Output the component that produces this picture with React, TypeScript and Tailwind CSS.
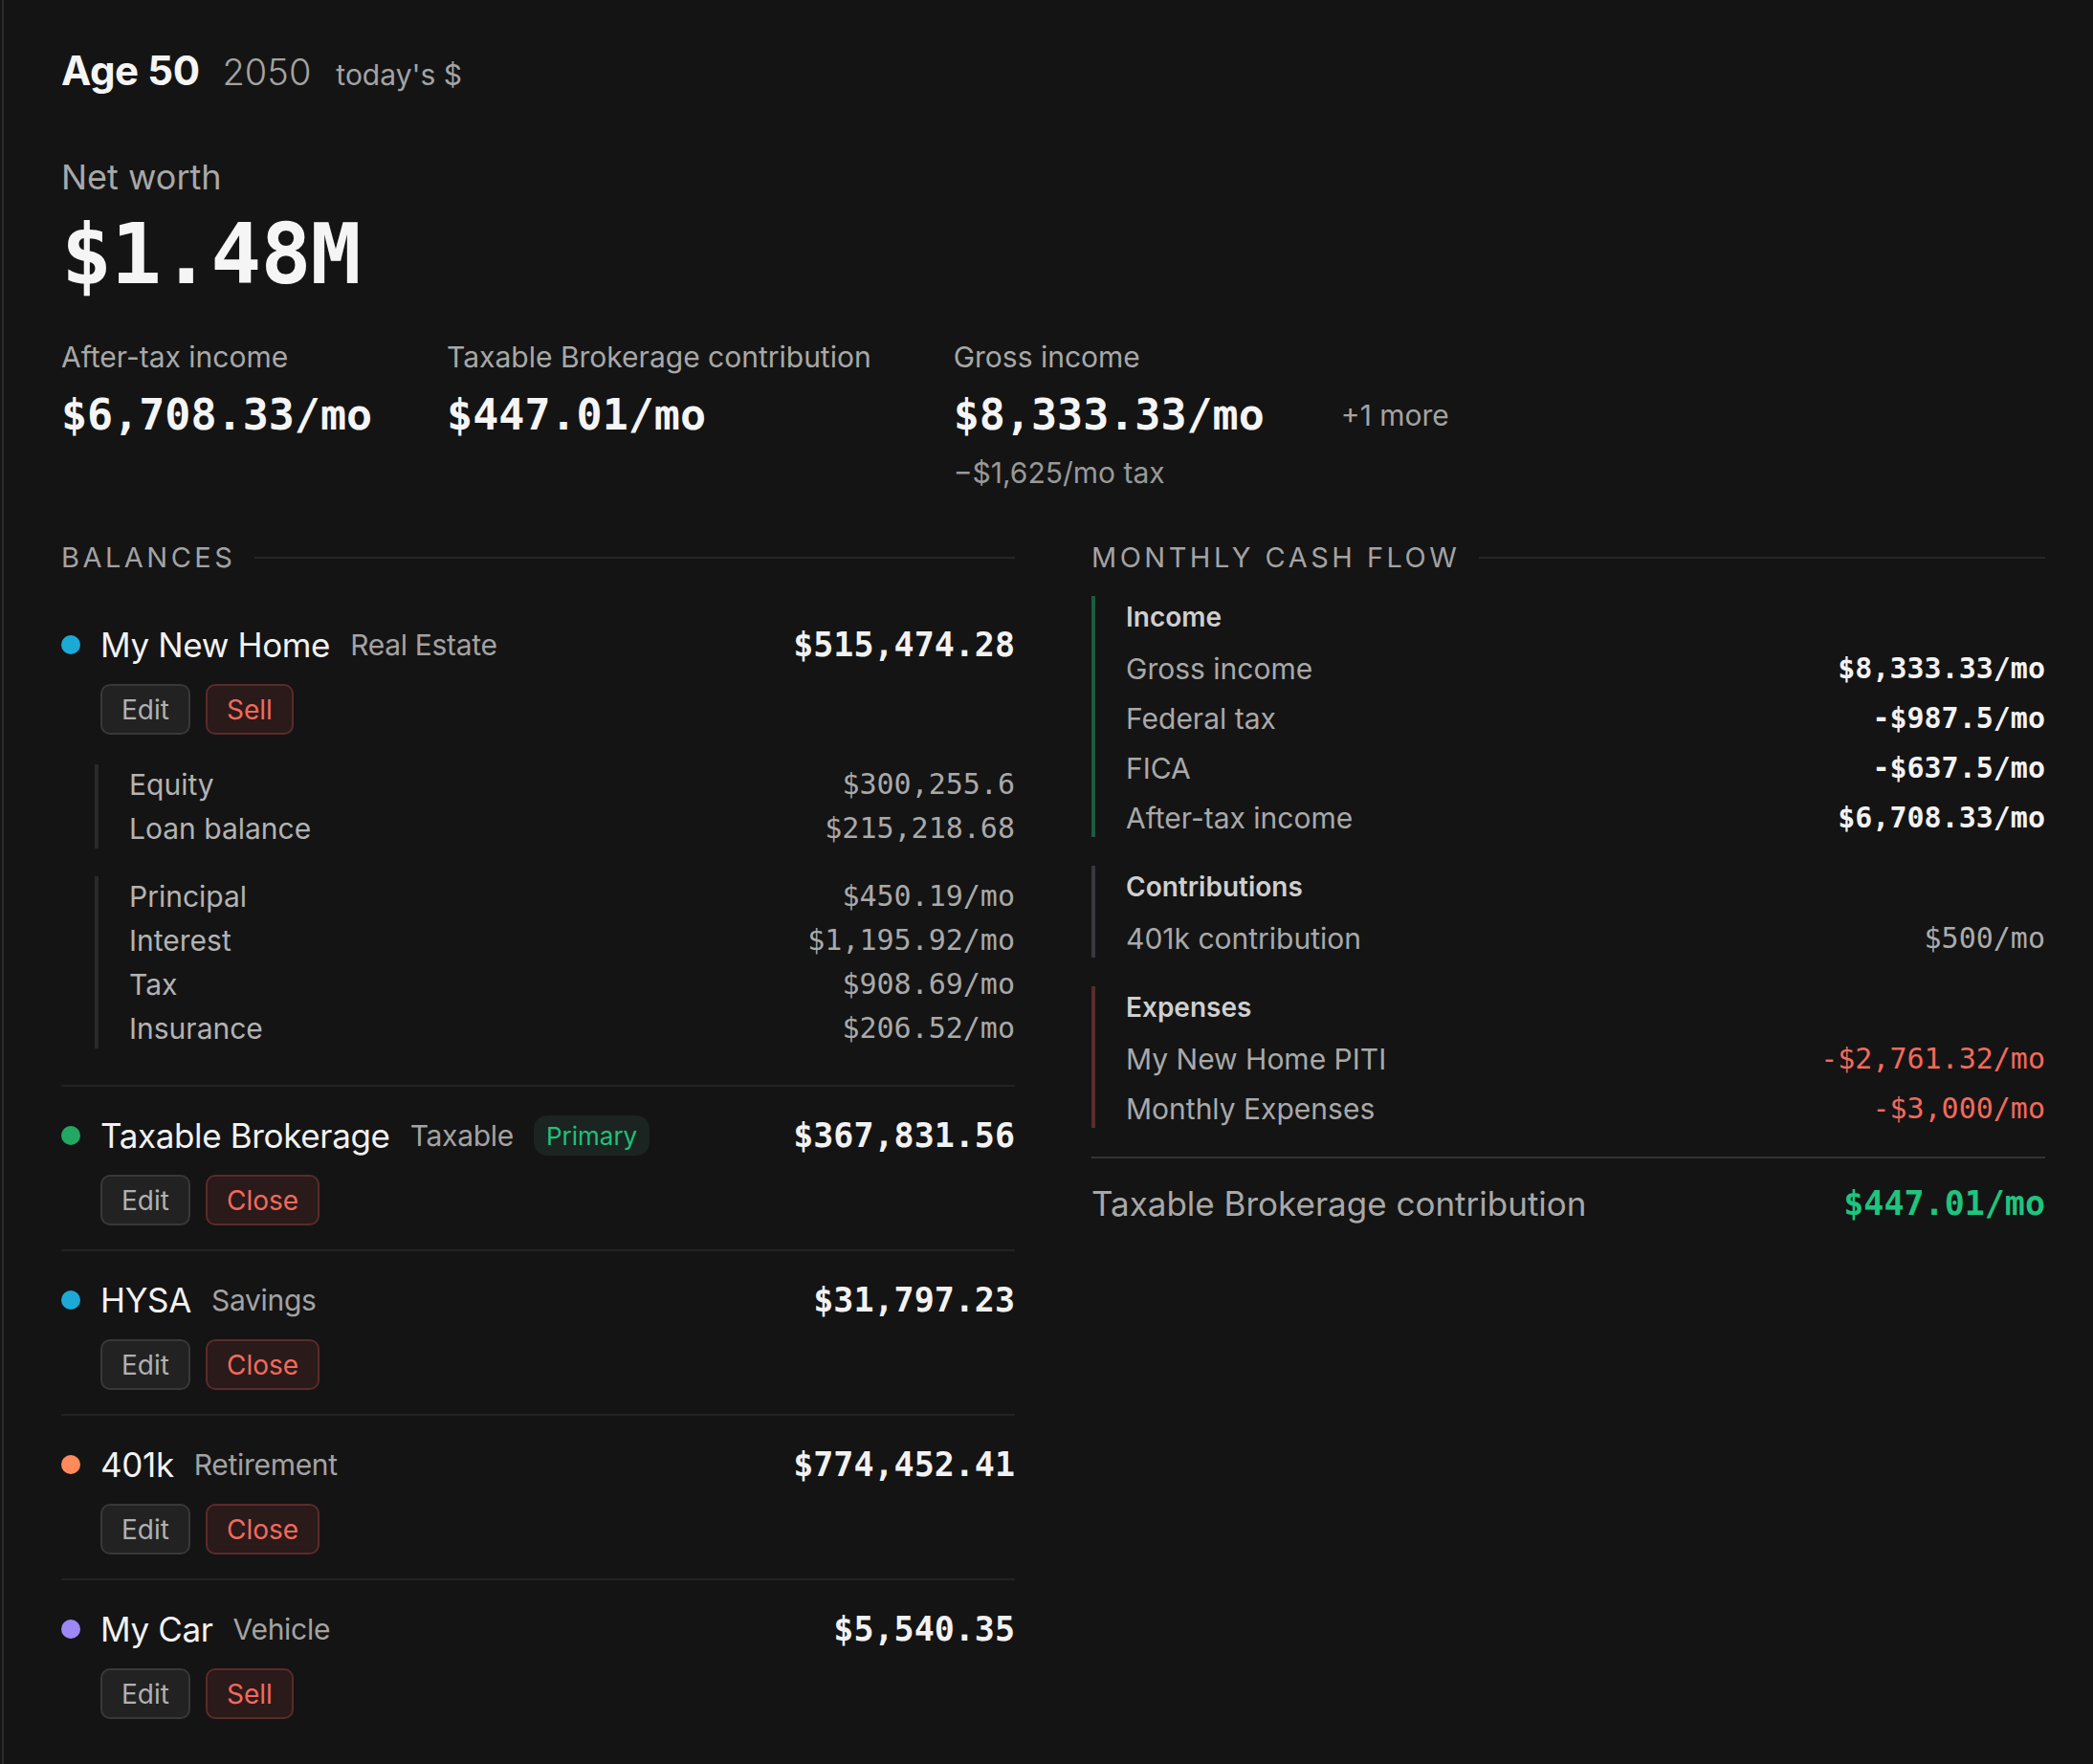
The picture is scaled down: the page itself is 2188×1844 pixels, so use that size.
import React from "react";

type Detail = { label: string; value: string };

function DetailGroup({ rows }: { rows: Detail[] }) {
  return (
    <div className="flex flex-col gap-[4px] border-l-4 border-[#2a2a2a] pl-8">
      {rows.map((r) => (
        <div key={r.label} className="flex items-center justify-between leading-[42px]">
          <span className="text-[30px] text-[#b3b3b3]">{r.label}</span>
          <span className="font-['DejaVu_Sans_Mono',monospace] text-[30px] text-[#a9a9a9]">{r.value}</span>
        </div>
      ))}
    </div>
  );
}

function Item({
  dotClass,
  name,
  type,
  badge,
  value,
  action,
  last,
  children,
}: {
  dotClass: string;
  name: string;
  type: string;
  badge?: string;
  value: string;
  action: string;
  last?: boolean;
  children?: React.ReactNode;
}) {
  return (
    <div className={last ? "pt-[30px] pb-[25px]" : "border-b-2 border-[#232323] pt-[30px] pb-[25px]"}>
      <div className="flex h-[42px] items-center justify-between">
        <div className="flex items-center">
          <span className={`h-5 w-5 rounded-full ${dotClass}`} />
          <span className="ml-[21px] text-[35px] leading-[42px] tracking-[-0.01em] text-[#f2f2f2]">{name}</span>
          <span className="ml-[21px] text-[30px] leading-[42px] tracking-[-0.01em] text-[#a3a3a3]">{type}</span>
          {badge && (
            <span className="ml-[21px] flex h-[42px] items-center rounded-[14px] bg-[#1b2420] px-[13px] text-[26px] text-[#1fc07c]">
              {badge}
            </span>
          )}
        </div>
        <span className="font-['DejaVu_Sans_Mono',monospace] text-[35px] font-bold text-[#f2f2f2]">{value}</span>
      </div>
      <div className="ml-[41px] mt-5 flex gap-4">
        <button className="flex h-[53px] items-center rounded-[10px] border-2 border-[#383838] bg-[#222222] px-[20px] text-[28px] text-[#b0b0b0]">
          Edit
        </button>
        <button className="flex h-[53px] items-center rounded-[10px] border-2 border-[#5a2b2a] bg-[#2a1a1a] px-[20px] text-[28px] text-[#f26a5c]">
          {action}
        </button>
      </div>
      {children}
    </div>
  );
}

function FlowGroup({
  title,
  borderClass,
  rows,
}: {
  title: string;
  borderClass: string;
  rows: { label: string; value: string; valueClass: string }[];
}) {
  return (
    <div className={`flex flex-col gap-3 border-l-4 pl-8 ${borderClass}`}>
      <div className="text-[28px] font-semibold leading-[44px] text-[#cfcfcf]">{title}</div>
      {rows.map((r) => (
        <div key={r.label} className="flex items-center justify-between leading-[40px]">
          <span className="text-[30px] text-[#a9a9a9]">{r.label}</span>
          <span className={`font-['DejaVu_Sans_Mono',monospace] text-[30px] ${r.valueClass}`}>{r.value}</span>
        </div>
      ))}
    </div>
  );
}

function SectionHeader({ title }: { title: string }) {
  return (
    <div className="mb-[22px] flex h-[36px] items-center gap-5">
      <span className="text-[29px] uppercase leading-[36px] tracking-[0.12em] text-[#a3a3a3]">{title}</span>
      <div className="h-[2px] flex-1 bg-[#262626]" />
    </div>
  );
}

export default function App() {
  return (
    <div className="min-h-screen bg-[#141414] font-['Inter','Noto_Sans',sans-serif] text-[#f2f2f2]">
      <div className="ml-[2px] min-h-screen border-l-2 border-[#2b2b2b] pl-[60px] pr-[50px] pt-[49px] pb-[20px]">
        {/* Header */}
        <div className="flex h-[50px] items-baseline">
          <span className="text-[42px] font-bold leading-[50px] tracking-[-0.01em] text-[#f5f5f5]">Age 50</span>
          <span className="ml-[24px] text-[38px] font-light leading-[50px] text-[#a3a3a3]">2050</span>
          <span className="ml-[26px] text-[30px] leading-[50px] text-[#a3a3a3]">today's $</span>
        </div>

        {/* Net worth */}
        <div className="mt-[65px] text-[36px] leading-[42px] text-[#a8a8a8]">Net worth</div>
        <div className="mt-[15px] font-['DejaVu_Sans_Mono',monospace] text-[88px] font-bold leading-[90px] tracking-[-0.01em] text-[#f5f5f5]">
          $1.48M
        </div>

        {/* Stats */}
        <div className="mt-[42px] flex items-start">
          <div className="flex flex-col">
            <span className="text-[30px] leading-[40px] text-[#a8a8a8]">After-tax income</span>
            <span className="mt-[13px] font-['DejaVu_Sans_Mono',monospace] text-[45px] font-bold leading-[56px] text-[#f5f5f5]">
              $6,708.33/mo
            </span>
          </div>
          <div className="ml-[78px] flex flex-col">
            <span className="text-[30px] leading-[40px] text-[#a8a8a8]">Taxable Brokerage contribution</span>
            <span className="mt-[13px] font-['DejaVu_Sans_Mono',monospace] text-[45px] font-bold leading-[56px] text-[#f5f5f5]">
              $447.01/mo
            </span>
          </div>
          <div className="ml-[86px] flex flex-col">
            <span className="text-[30px] leading-[40px] text-[#a8a8a8]">Gross income</span>
            <span className="mt-[13px] font-['DejaVu_Sans_Mono',monospace] text-[45px] font-bold leading-[56px] text-[#f5f5f5]">
              $8,333.33/mo
            </span>
            <span className="mt-[12px] text-[30px] leading-[40px] text-[#999999]">−$1,625/mo tax</span>
          </div>
          <span className="ml-20 self-center text-[30px] leading-[40px] text-[#a3a3a3]">+1 more</span>
        </div>

        {/* Columns */}
        <div className="mt-[51px] grid grid-cols-2 items-start gap-x-20">
          {/* Balances */}
          <div>
            <SectionHeader title="Balances" />
            <Item dotClass="bg-[#1ca9d5]" name="My New Home" type="Real Estate" value="$515,474.28" action="Sell">
              <div className="ml-[35px] mt-[31px] flex flex-col gap-[29px] pb-[13px]">
                <DetailGroup
                  rows={[
                    { label: "Equity", value: "$300,255.6" },
                    { label: "Loan balance", value: "$215,218.68" },
                  ]}
                />
                <DetailGroup
                  rows={[
                    { label: "Principal", value: "$450.19/mo" },
                    { label: "Interest", value: "$1,195.92/mo" },
                    { label: "Tax", value: "$908.69/mo" },
                    { label: "Insurance", value: "$206.52/mo" },
                  ]}
                />
              </div>
            </Item>
            <Item
              dotClass="bg-[#22a862]"
              name="Taxable Brokerage"
              type="Taxable"
              badge="Primary"
              value="$367,831.56"
              action="Close"
            />
            <Item dotClass="bg-[#1ca9d5]" name="HYSA" type="Savings" value="$31,797.23" action="Close" />
            <Item dotClass="bg-[#ff8a5c]" name="401k" type="Retirement" value="$774,452.41" action="Close" />
            <Item dotClass="bg-[#9d88f5]" name="My Car" type="Vehicle" value="$5,540.35" action="Sell" last />
          </div>

          {/* Monthly cash flow */}
          <div>
            <SectionHeader title="Monthly Cash Flow" />
            <div className="flex flex-col gap-[30px]">
              <FlowGroup
                title="Income"
                borderClass="border-[#1d5a41]"
                rows={[
                  { label: "Gross income", value: "$8,333.33/mo", valueClass: "font-bold text-[#f2f2f2]" },
                  { label: "Federal tax", value: "-$987.5/mo", valueClass: "font-bold text-[#f2f2f2]" },
                  { label: "FICA", value: "-$637.5/mo", valueClass: "font-bold text-[#f2f2f2]" },
                  { label: "After-tax income", value: "$6,708.33/mo", valueClass: "font-bold text-[#f2f2f2]" },
                ]}
              />
              <FlowGroup
                title="Contributions"
                borderClass="border-[#38383d]"
                rows={[{ label: "401k contribution", value: "$500/mo", valueClass: "text-[#ababab]" }]}
              />
              <FlowGroup
                title="Expenses"
                borderClass="border-[#5a2d2d]"
                rows={[
                  { label: "My New Home PITI", value: "-$2,761.32/mo", valueClass: "text-[#f26a5c]" },
                  { label: "Monthly Expenses", value: "-$3,000/mo", valueClass: "text-[#f26a5c]" },
                ]}
              />
            </div>
            <div className="mt-[30px] h-[2px] bg-[#343434]" />
            <div className="mt-[23px] flex h-[48px] items-center justify-between">
              <span className="text-[35px] text-[#a8a8a8]">Taxable Brokerage contribution</span>
              <span className="font-['DejaVu_Sans_Mono',monospace] text-[35px] font-bold text-[#1fc47e]">$447.01/mo</span>
            </div>
          </div>
        </div>
      </div>
    </div>
  );
}
